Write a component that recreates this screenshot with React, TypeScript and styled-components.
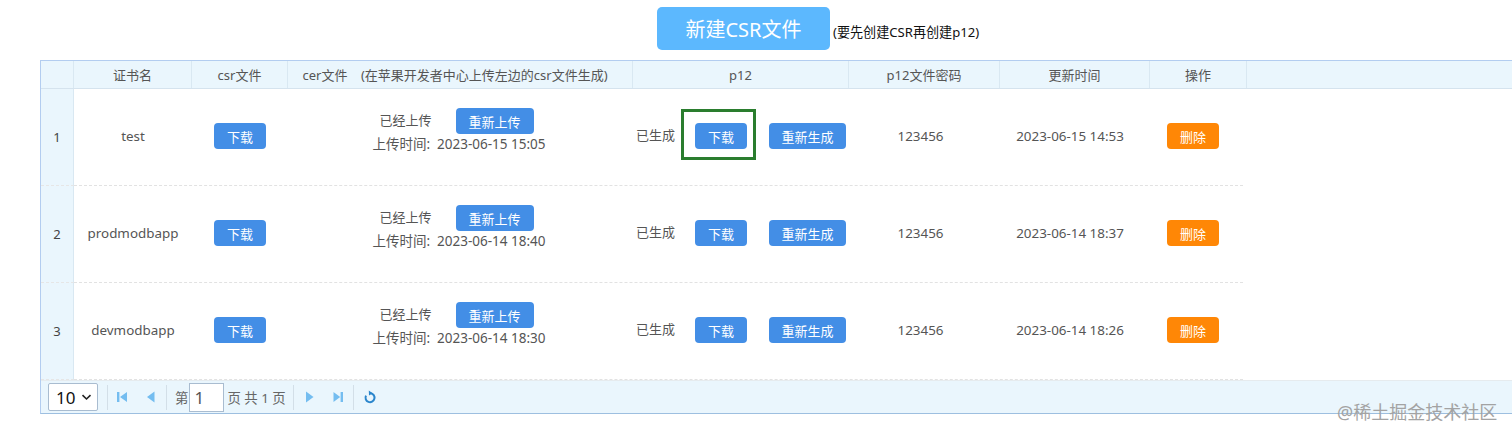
import React from "react";
import styled, { createGlobalStyle } from "styled-components";

const Global = createGlobalStyle`
  html, body { margin: 0; padding: 0; background: #fff; overflow: hidden; }
  body { font-family: "Noto Sans", "Noto Sans CJK SC", sans-serif; color: #555; }
`;

const Page = styled.div`
  position: relative;
  width: 1512px;
  height: 438px;
  padding-top: 7px;
  box-sizing: border-box;
`;
const Toolbar = styled.div`
  display: flex;
  align-items: center;
  height: 43px;
  padding-left: 657px;
  gap: 3px;
  margin-bottom: 10px;
`;
const CreateButton = styled.button`
  width: 173px;
  height: 43px;
  border: 0;
  border-radius: 5px;
  background: #5cb8fe;
  color: #fff;
  font: 20px "Noto Sans", "Noto Sans CJK SC", sans-serif;
  padding: 0;
`;
const Hint = styled.span`
  font-size: 13.1px;
  color: #111;
  margin-top: 5px;
  white-space: nowrap;
`;
const Panel = styled.div`
  margin-left: 40px;
  height: 354px;
  border: 1px solid #b3cdf0;
  border-bottom-color: #9dbfe0;
  border-right: 0;
  box-sizing: border-box;
  display: flex;
  flex-direction: column;
`;
const HeaderRow = styled.div`
  display: flex;
  height: 27px;
  flex: none;
  background: #eaf6fd;
  border-bottom: 1px solid #d5e3ee;
`;
const HeadCell = styled.div<{ $w: number; $pr?: number }>`
  width: ${(p) => p.$w}px;
  flex: none;
  box-sizing: border-box;
  border-right: 1px solid #d9e8f2;
  padding-right: ${(p) => p.$pr ?? 0}px;
  display: flex;
  align-items: center;
  justify-content: center;
  font-size: 13px;
  white-space: pre;
`;
const Row = styled.div`
  display: flex;
  height: 97px;
  flex: none;
`;
const NumCell = styled.div`
  width: 33px;
  flex: none;
  box-sizing: border-box;
  background: #eaf6fd;
  border-right: 1px solid #d9e8f2;
  border-bottom: 1px dashed #e6e6e6;
  display: flex;
  align-items: center;
  justify-content: center;
  font-size: 13px;
  color: #444;
`;
const Cells = styled.div`
  display: flex;
  width: 1169px;
  flex: none;
  border-bottom: 1px dashed #e2e2e2;
`;
const Cell = styled.div<{ $w: number }>`
  width: ${(p) => p.$w}px;
  flex: none;
  display: flex;
  align-items: center;
  justify-content: center;
  font-size: 13.4px;
  color: #555;
  padding-bottom: 2px;
  box-sizing: border-box;
`;
const ActionButton = styled.span<{ $w: number; $danger?: boolean }>`
  display: inline-flex;
  align-items: center;
  justify-content: center;
  width: ${(p) => p.$w}px;
  height: 26px;
  border-radius: 4px;
  background: ${(p) => (p.$danger ? "#ff8706" : "#438ee6")};
  color: #fff;
  font-size: 13px;
  flex: none;
`;
const UploadCell = styled.div`
  display: flex;
  flex-direction: column;
  align-items: center;
  gap: 1px;
  margin-top: -11px;
`;
const UploadLine = styled.div`
  display: flex;
  align-items: center;
  gap: 24px;
  margin-right: 8px;
`;
const UploadStatus = styled.span`
  margin-top: -4px;
  font-size: 13px;
`;
const UploadTime = styled.div`
  font-size: 13.5px;
  line-height: 18px;
  white-space: nowrap;
  margin-right: 3px;
`;
const P12Cell = styled.div`
  display: flex;
  align-items: center;
  width: 100%;
  padding-left: 3px;
  box-sizing: border-box;
`;
const P12Status = styled.span`
  width: 59px;
  flex: none;
  margin-top: -4px;
  font-size: 13px;
`;
const P12Download = styled.div<{ $marked?: boolean }>`
  position: relative;
  margin-right: 22px;
  display: flex;
  &::after {
    content: ${(p) => (p.$marked ? '""' : "none")};
    position: absolute;
    left: -14px;
    top: -14px;
    width: 75px;
    height: 51px;
    box-sizing: border-box;
    border: 3px solid #2a7d2e;
  }
`;
const Pager = styled.div`
  flex: 1;
  background: #eaf6fd;
  display: flex;
  align-items: center;
  padding-left: 7px;
  font-size: 13.4px;
  color: #666;
  border-top: 1px solid #e6ebee;
`;
const PageSize = styled.div`
  width: 50px;
  height: 28px;
  box-sizing: border-box;
  border: 1px solid #a9bcd0;
  background: #fff;
  border-radius: 2px;
  display: flex;
  align-items: center;
  justify-content: space-between;
  padding: 0 5px 0 7px;
  font-size: 17px;
  color: #111;
`;
const Sep = styled.span<{ $l: number; $r: number }>`
  width: 1px;
  height: 25px;
  background: #d3dfe8;
  margin: 0 ${(p) => p.$r}px 0 ${(p) => p.$l}px;
  flex: none;
`;
const PageIcon = styled.svg<{ $r: number }>`
  width: 14px;
  height: 14px;
  margin-right: ${(p) => p.$r}px;
  flex: none;
`;
const PageInput = styled.div`
  width: 35px;
  height: 29px;
  box-sizing: border-box;
  border: 1px solid #a9bcd0;
  background: #fff;
  display: flex;
  align-items: center;
  padding-left: 4px;
  margin: 0 3px 0 1px;
  font-size: 17px;
  color: #555;
`;
const Watermark = styled.div`
  position: absolute;
  left: 1337px;
  top: 401px;
  font-size: 18px;
  line-height: 22px;
  color: #a3a3a3;
  white-space: nowrap;
`;

const columns = [
  { w: 118, t: "证书名" },
  { w: 96, t: "csr文件" },
  { w: 345, t: "cer文件    (在苹果开发者中心上传左边的csr文件生成)", pr: 10 },
  { w: 216, t: "p12" },
  { w: 151, t: "p12文件密码" },
  { w: 150, t: "更新时间" },
  { w: 97, t: "操作" },
];
const rows = [
  { n: 1, name: "test", up: "2023-06-15 15:05", at: "2023-06-15 14:53" },
  { n: 2, name: "prodmodbapp", up: "2023-06-14 18:40", at: "2023-06-14 18:37" },
  { n: 3, name: "devmodbapp", up: "2023-06-14 18:30", at: "2023-06-14 18:26" },
];

const First = () => (
  <PageIcon $r={14} viewBox="0 0 14 14">
    <path d="M2 2h2.4v10H2zM12 2v10L5 7z" fill="#74bdf0" />
  </PageIcon>
);
const Prev = () => (
  <PageIcon $r={0} viewBox="0 0 14 14">
    <path d="M11.5 1.5v11L4 7z" fill="#74bdf0" />
  </PageIcon>
);
const Next = () => (
  <PageIcon $r={15} viewBox="0 0 14 14">
    <path d="M4 1.5v11L11.5 7z" fill="#74bdf0" />
  </PageIcon>
);
const Last = () => (
  <PageIcon $r={0} viewBox="0 0 14 14">
    <path d="M2.5 2v10L9.2 7zM9.6 2H12v10H9.6z" fill="#74bdf0" />
  </PageIcon>
);
const Reload = () => (
  <PageIcon $r={0} viewBox="0 0 14 14">
    <path d="M7.6 3.2A4.5 4.5 0 1 1 3 5.6" fill="none" stroke="#2b86cc" strokeWidth="2" />
    <path d="M5.8 0.6 9.6 3.2 6 5.6z" fill="#2b86cc" />
  </PageIcon>
);

export default function App() {
  return (
    <Page>
      <Global />
      <Toolbar>
        <CreateButton>新建CSR文件</CreateButton>
        <Hint>(要先创建CSR再创建p12)</Hint>
      </Toolbar>
      <Panel>
        <HeaderRow>
          <HeadCell $w={33} />
          {columns.map((c) => (
            <HeadCell key={c.t} $w={c.w} $pr={c.pr}>
              {c.t}
            </HeadCell>
          ))}
        </HeaderRow>
        {rows.map((r) => (
          <Row key={r.n}>
            <NumCell>{r.n}</NumCell>
            <Cells>
              <Cell $w={118}>{r.name}</Cell>
              <Cell $w={96}>
                <ActionButton $w={52}>下载</ActionButton>
              </Cell>
              <Cell $w={345}>
                <UploadCell>
                  <UploadLine>
                    <UploadStatus>已经上传</UploadStatus>
                    <ActionButton $w={78}>重新上传</ActionButton>
                  </UploadLine>
                  <UploadTime>上传时间:&nbsp;&nbsp;{r.up}</UploadTime>
                </UploadCell>
              </Cell>
              <Cell $w={216}>
                <P12Cell>
                  <P12Status>已生成</P12Status>
                  <P12Download $marked={r.n === 1}>
                    <ActionButton $w={52}>下载</ActionButton>
                  </P12Download>
                  <ActionButton $w={77}>重新生成</ActionButton>
                </P12Cell>
              </Cell>
              <Cell $w={143}>123456</Cell>
              <Cell $w={156}>{r.at}</Cell>
              <Cell $w={90}>
                <ActionButton $w={52} $danger>
                  删除
                </ActionButton>
              </Cell>
            </Cells>
          </Row>
        ))}
        <Pager>
          <PageSize>
            10
            <svg width="11" height="7" viewBox="0 0 11 7">
              <path d="M1.5 1.2 5.5 5l4-3.8" fill="none" stroke="#222" strokeWidth="1.6" />
            </svg>
          </PageSize>
          <Sep $l={9} $r={7} />
          <First />
          <Prev />
          <Sep $l={9} $r={8} />
          <span>第</span>
          <PageInput>1</PageInput>
          <span>页 共 1 页</span>
          <Sep $l={7} $r={8} />
          <Next />
          <Last />
          <Sep $l={8} $r={9} />
          <Reload />
        </Pager>
      </Panel>
      <Watermark>@稀土掘金技术社区</Watermark>
    </Page>
  );
}
